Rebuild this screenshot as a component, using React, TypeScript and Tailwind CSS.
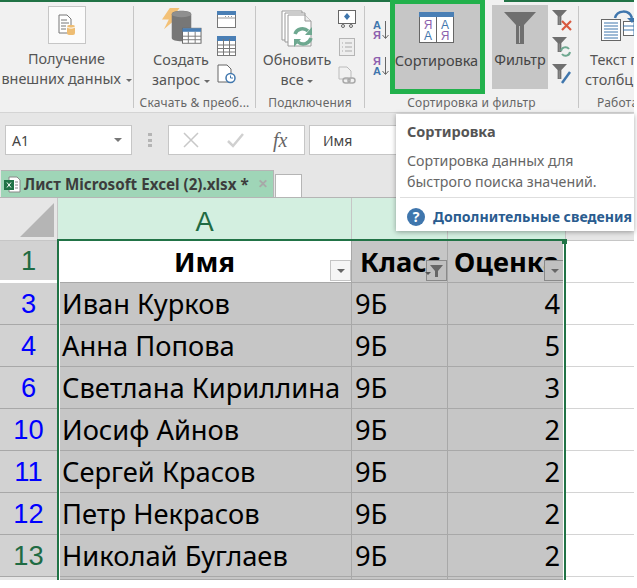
const uiFont = "font-['Noto_Sans','Open_Sans',sans-serif]"

const rows = [
  { n: '3', name: 'Иван Курков', score: '4' },
  { n: '4', name: 'Анна Попова', score: '5' },
  { n: '6', name: 'Светлана Кириллина', score: '3' },
  { n: '10', name: 'Иосиф Айнов', score: '2' },
  { n: '11', name: 'Сергей Красов', score: '2' },
  { n: '12', name: 'Петр Некрасов', score: '2' },
  { n: '13', name: 'Николай Буглаев', score: '2' },
]

function Caret({ className = '' }: { className?: string }) {
  return <span className={`inline-block w-0 h-0 border-x-[3px] border-x-transparent border-t-[3px] border-t-[#6a6a6a] align-middle ${className}`} />
}

function ExternalDataIcon() {
  return (
    <svg width="18" height="22" viewBox="0 0 18 22">
      <path d="M1 1h8l4 4v14H1z" fill="#fff" stroke="#777" />
      <path d="M3 6h6M3 9h8M3 12h5M3 15h5" stroke="#777" />
      <rect x="9" y="11" width="8" height="10" rx="2" fill="#eebd73" />
      <path d="M9 13c2 1.500 6 1.500 8 0" stroke="#fff" fill="none" />
    </svg>
  )
}

function QueryIcon() {
  return (
    <svg width="41" height="37" viewBox="0 0 42 42" preserveAspectRatio="none">
      <path d="M9 0h10l-6 9h6L3 24l5-11H1z" fill="#f3c177" />
      <path d="M11 7c0-5 20-5 20 0v27c0 5-20 5-20 0z" fill="#777" />
      <ellipse cx="21" cy="7" rx="10" ry="3.500" fill="#8f8f8f" />
      <rect x="22" y="23" width="19" height="17" fill="#fff" stroke="#666" />
      <rect x="22" y="23" width="19" height="4" fill="#4a7fb5" />
      <path d="M22 32h19M22 36h19M28 27v13M35 27v13" stroke="#777" />
    </svg>
  )
}

function SmallWindow() {
  return (
    <svg width="19" height="17" viewBox="0 0 19 17">
      <rect x=".5" y=".5" width="18" height="16" fill="#fff" stroke="#777" />
      <rect x="0" y="0" width="19" height="4" fill="#4a7fb5" />
      <path d="M1 7h17" stroke="#999" />
      <path d="M8 5.500h9" stroke="#999" strokeDasharray="1 2" />
    </svg>
  )
}

function SmallTable() {
  return (
    <svg width="19" height="20" viewBox="0 0 19 20">
      <rect x=".5" y=".5" width="18" height="19" fill="#fff" stroke="#777" />
      <rect x="0" y="0" width="19" height="5" fill="#4a7fb5" />
      <path d="M1 9h18M1 12.500h18M1 16h18M6.500 3v17M12.500 3v17" stroke="#777" />
    </svg>
  )
}

function RecentIcon() {
  return (
    <svg width="19" height="20" viewBox="0 0 19 20">
      <path d="M1 1h9l4 4v13H1z" fill="#fff" stroke="#666" />
      <circle cx="13.500" cy="14" r="4.500" fill="#fff" stroke="#3f76ad" strokeWidth="1.500" />
      <path d="M13.500 11.500V14h2.500" stroke="#3f76ad" fill="none" />
    </svg>
  )
}

function RefreshAllIcon() {
  return (
    <svg width="32" height="38" viewBox="0 0 32 38">
      <path d="M1 1h20v29H1z" fill="#fff" stroke="#999" />
      <path d="M4 3h20v29H4z" fill="#fff" stroke="#999" />
      <path d="M7 5h17l6 6v25H7z" fill="#fff" stroke="#999" />
      <path d="M24 5v6h6" fill="#eee" stroke="#999" />
      <path d="M14 24a8 8 0 0 1 13-3" stroke="#6ea890" strokeWidth="3.500" fill="none" />
      <path d="M30 28a8 8 0 0 1-13 4" stroke="#6ea890" strokeWidth="3.500" fill="none" />
      <path d="M31 17v8h-7zM13 37v-8h7z" fill="#6ea890" />
    </svg>
  )
}

function ConnectionIcons() {
  return (
    <div className="flex flex-col gap-[10px] items-center">
      <svg width="18" height="18" viewBox="0 0 18 18">
        <rect x=".5" y=".5" width="17" height="13" fill="#fff" stroke="#666" />
        <path d="M9 3l3 3.500-3 3.500-3-3.500z" fill="#3f76ad" />
        <circle cx="5" cy="16" r="1.500" fill="none" stroke="#666" />
        <circle cx="13" cy="16" r="1.500" fill="none" stroke="#666" />
      </svg>
      <svg width="16" height="18" viewBox="0 0 16 18">
        <rect x=".5" y=".5" width="15" height="17" fill="#eee" stroke="#b5b5b5" />
        <path d="M3 5h1M6 5h7M3 9h1M6 9h7M3 13h1M6 13h7" stroke="#aaa" />
      </svg>
      <svg width="18" height="19" viewBox="0 0 18 19">
        <path d="M1 1h8l4 4v8H1z" fill="#f1f1f1" stroke="#bbb" />
        <rect x="5" y="12" width="7" height="5" rx="2.500" fill="none" stroke="#aaa" strokeWidth="1.500" />
        <rect x="10" y="12" width="7" height="5" rx="2.500" fill="none" stroke="#aaa" strokeWidth="1.500" />
      </svg>
    </div>
  )
}

function SortSmall({ flip }: { flip?: boolean }) {
  const top = flip ? ['Я', 'text-[#8d5fae]'] : ['А', 'text-[#3f76ad]']
  const bottom = flip ? ['А', 'text-[#3f76ad]'] : ['Я', 'text-[#8d5fae]']
  return (
    <div className="flex items-center gap-[1px] h-[20px]">
      <div className="flex flex-col text-[11px] leading-[10px] font-bold font-['Liberation_Sans',sans-serif]">
        <span className={top[1]}>{top[0]}</span>
        <span className={bottom[1]}>{bottom[0]}</span>
      </div>
      <svg width="7" height="20" viewBox="0 0 7 20">
        <path d="M3.500 1v17M.5 15l3 3.500 3-3.500" stroke="#666" fill="none" />
      </svg>
    </div>
  )
}

function SortIcon() {
  return (
    <svg width="35" height="31" viewBox="0 0 35 31">
      <rect x=".5" y=".5" width="34" height="30" fill="#fff" stroke="#666" />
      <rect x="0" y="0" width="35" height="5" fill="#4a7fb5" />
      <path d="M17.500 5v26" stroke="#666" />
      <text x="9" y="17" fontSize="12" fill="#8d5fae" textAnchor="middle" fontFamily="Liberation Sans">Я</text>
      <text x="9" y="28" fontSize="12" fill="#3f76ad" textAnchor="middle" fontFamily="Liberation Sans">А</text>
      <text x="26" y="17" fontSize="12" fill="#3f76ad" textAnchor="middle" fontFamily="Liberation Sans">А</text>
      <text x="26" y="28" fontSize="12" fill="#8d5fae" textAnchor="middle" fontFamily="Liberation Sans">Я</text>
    </svg>
  )
}

function Funnel({ size = 32, color = '#6f6f6f' }: { size?: number; color?: string }) {
  return (
    <svg width={size} height={size} viewBox="0 0 32 32">
      <path d="M0 0h32L20 13v19h-8V13z" fill={color} />
      <path d="M15.500 14v17" stroke="#bbb" />
    </svg>
  )
}

function FilterSideIcons() {
  return (
    <div className="flex flex-col gap-[6px] items-center">
      <div className="relative w-[20px] h-[21px]">
        <Funnel size={15} />
        <svg width="11" height="11" viewBox="0 0 11 11" className="absolute right-0 bottom-0">
          <path d="M1 1l9 9M10 1l-9 9" stroke="#d9593f" strokeWidth="2.200" />
        </svg>
      </div>
      <div className="relative w-[20px] h-[21px]">
        <Funnel size={15} />
        <svg width="13" height="13" viewBox="0 0 13 13" className="absolute right-0 bottom-0">
          <path d="M2 6a4.500 4.500 0 0 1 8-2M11 7a4.500 4.500 0 0 1-8 2" stroke="#6ea890" strokeWidth="2" fill="none" />
        </svg>
      </div>
      <div className="relative w-[20px] h-[21px]">
        <Funnel size={15} />
        <svg width="12" height="14" viewBox="0 0 12 14" className="absolute right-0 bottom-0">
          <path d="M10 1L2 12" stroke="#3f76ad" strokeWidth="2.500" />
        </svg>
      </div>
    </div>
  )
}

function TextColumnsIcon() {
  return (
    <svg width="44" height="32" viewBox="0 0 44 32">
      <rect x=".5" y="9.500" width="19" height="21" fill="#fff" stroke="#666" />
      <path d="M3 13h14M3 16h14M3 19h14M3 22h14M3 25h14M3 28h14" stroke="#3f76ad" />
      <rect x="22.500" y="11.500" width="21" height="14" fill="#fff" stroke="#666" />
      <path d="M22 16h22M22 20h22M33 12v14" stroke="#3f76ad" />
      <path d="M14 8c2-8 14-9 17 0" stroke="#3f76ad" strokeWidth="2.500" fill="none" />
      <path d="M26 8h9l-4 5z" fill="#3f76ad" />
    </svg>
  )
}

function Group({ label, className, labelClass = '', children }: { label: string; className: string; labelClass?: string; children: React.ReactNode }) {
  return (
    <div className={`flex flex-col border-r border-[#c6c6c6] my-[4px] h-[102px] shrink-0 ${className}`}>
      <div className="flex-1 flex min-h-0">{children}</div>
      <div className={`h-[10px] text-[12px] leading-[10px] text-[#666] text-center whitespace-nowrap tracking-[0.2px] ${labelClass}`}>{label}</div>
    </div>
  )
}

function FilterButton({ active, selected }: { active?: boolean; selected?: boolean }) {
  return (
    <div className={`absolute right-0 bottom-[1px] w-[21px] h-[21px] flex items-center justify-center border ${selected ? 'border-[#8a8a8a] bg-[#c0c0c0]' : 'border-[#c4c4c4] bg-[#f5f5f5]'}`}>
      {active ? (
        <div className="flex items-center relative">
          <svg width="13" height="12" viewBox="0 0 13 12">
            <path d="M0 0h13L8 6v6H5V6z" fill="#666" />
          </svg>
          <span className="absolute left-[-5px] top-[7px] w-0 h-0 border-x-[3px] border-x-transparent border-t-[3px] border-t-[#555]" />
        </div>
      ) : (
        <span className="w-0 h-0 border-x-[4px] border-x-transparent border-t-[4px] border-t-[#666]" />
      )}
    </div>
  )
}

function Ribbon() {
  const btnText = 'text-[14.400px] leading-[20px] text-[#555] text-center whitespace-nowrap'
  return (
    <div className="h-[113px] bg-[#f1f1f1] border-t-[2px] border-[#217346] border-b border-b-[#d4d4d4] flex shrink-0 relative">
      <Group label="" className="w-[134px]">
        <div className="flex flex-col items-center w-full">
          <div className="w-[38px] h-[38px] bg-[#fbfbfb] border border-[#c6c6c6] flex items-center justify-center">
            <ExternalDataIcon />
          </div>
          <div className={`${btnText} mt-[5px]`}>
            Получение<br />внешних данных <Caret className="ml-[1px]" />
          </div>
        </div>
      </Group>
      <Group label="Скачать & преоб..." className="w-[122px]">
        <div className="flex pl-[14px] pt-[2px]">
          <div className="flex flex-col items-center w-[66px]">
            <QueryIcon />
            <div className={`${btnText} mt-[5px]`}>
              Создать<br />запрос <Caret />
            </div>
          </div>
          <div className="flex flex-col gap-[8px] items-center mt-[3px] ml-[3px]">
            <SmallWindow />
            <SmallTable />
            <RecentIcon />
          </div>
        </div>
      </Group>
      <Group label="Подключения" className="w-[109px]">
        <div className="flex pl-[6px] pt-[4px]">
          <div className="flex flex-col items-center w-[70px]">
            <RefreshAllIcon />
            <div className={`${btnText} mt-[2px]`}>
              Обновить<br />все <Caret />
            </div>
          </div>
          <div className="ml-[6px]"><ConnectionIcons /></div>
        </div>
      </Group>
      <Group label="Сортировка и фильтр" className="w-[214px]">
        <div className="flex">
          <div className="flex flex-col gap-[16px] w-[26px] ml-[8px] mt-[14px]">
            <SortSmall />
            <SortSmall flip />
          </div>
          <div className="w-[91px] h-[86px] ml-[-8px] mt-[-2px] flex flex-col items-center bg-[#c6c6c6]">
            <div className="mt-[8px]"><SortIcon /></div>
            <div className="text-[14.500px] leading-[20px] text-[#444] mt-[7px]">Сортировка</div>
          </div>
          <div className="w-[56px] h-[84px] ml-[10px] mt-[-1px] flex flex-col items-center bg-[#c6c6c6]">
            <div className="mt-[7px]"><Funnel /></div>
            <div className="text-[14.400px] leading-[20px] text-[#444] mt-[6px]">Фильтр</div>
          </div>
          <div className="ml-[4px] mt-[4px]"><FilterSideIcons /></div>
        </div>
      </Group>
      <Group label="Работа" className="flex-1 border-r-0 min-w-0 overflow-hidden" labelClass="text-left pl-[18px]">
        <div className="flex flex-col pl-[6px] pt-[4px]">
          <div className="ml-[16px]"><TextColumnsIcon /></div>
          <div className="text-[14.400px] leading-[20px] text-[#555] mt-[8px] whitespace-nowrap">
            <span className="pl-[5px]">Текст п</span><br />столбц
          </div>
        </div>
      </Group>
    </div>
  )
}

function FormulaBar() {
  return (
    <div className="h-[58px] bg-[#e6e6e6] flex shrink-0 pt-[12px] pl-[5px]">
      <div className="w-[127px] h-[30px] bg-white border border-[#c6c6c6] flex items-center justify-between pl-[6px] pr-[9px] text-[14px] text-[#444]">
        A1 <span className="w-0 h-0 border-x-[4px] border-x-transparent border-t-[4px] border-t-[#777]" />
      </div>
      <div className="w-[4px] h-[14px] mt-[8px] ml-[16px] mr-[16px] flex flex-col justify-between">
        <span className="h-[3px] bg-[#b5b5b5]" />
        <span className="h-[3px] bg-[#b5b5b5]" />
        <span className="h-[3px] bg-[#b5b5b5]" />
      </div>
      <div className="w-[137px] h-[30px] bg-white border border-[#c6c6c6] flex items-center pl-[14px]">
        <svg width="16" height="16" viewBox="0 0 16 16"><path d="M1 1l14 14M15 1L1 15" stroke="#c8c8c8" strokeWidth="1.500" /></svg>
        <svg width="17" height="15" viewBox="0 0 17 15" className="ml-[28px]"><path d="M1 8l5 5L16 1" stroke="#d0d0d0" strokeWidth="2.500" fill="none" /></svg>
        <span className="ml-[29px] text-[20px] italic text-[#666] font-['Liberation_Serif',serif]">fx</span>
      </div>
      <div className="flex-1 h-[30px] ml-[4px] bg-white border border-[#c6c6c6] flex items-center pl-[13px] text-[14px] text-[#444]">Имя</div>
    </div>
  )
}

function TabStrip() {
  return (
    <div className="h-[27px] bg-[#e6e6e6] flex items-end shrink-0 border-b border-[#b5b5b5]">
      <div className="w-[273px] h-[27px] ml-[1px] bg-[#9fd5b7] border-t border-r border-[#b5b5b5] flex items-center pl-[3px] text-[15.200px] font-bold text-[#3c3c3c] whitespace-nowrap">
        <svg width="17" height="17" viewBox="0 0 17 17" className="shrink-0">
          <path d="M5 1h8l3 3v12H5z" fill="#fff" stroke="#888" />
          <path d="M11 6h3M11 9h3M11 12h3" stroke="#888" />
          <rect x="0" y="4" width="10" height="10" fill="#217346" />
          <path d="M3 6.500l4 5M7 6.500l-4 5" stroke="#fff" />
        </svg>
        <span className="ml-[3px]">Лист Microsoft Excel (2).xlsx *</span>
        <span className="ml-[9px] text-[#a8a8a8] text-[12px]">✕</span>
      </div>
      <div className="w-[27px] h-[23px] ml-[1px] bg-white border-x border-t border-[#b5b5b5]" />
    </div>
  )
}

function Sheet() {
  const cell = 'border-r border-b border-[#a8a8a8] bg-[#c6c6c6] flex items-center text-black'
  return (
    <div className="relative flex-1 grid grid-cols-[58px_294px_96px_118px_1fr] grid-rows-[43px_repeat(8,42px)] overflow-hidden text-[27.300px] leading-none font-['Noto_Sans',sans-serif]">
      {/* column headers */}
      <div className="relative bg-[#e6e6e6] border-r border-b border-[#c6c6c6] overflow-hidden">
        <div className="absolute right-[3px] bottom-[3px] w-0 h-0 border-l-[34px] border-l-transparent border-b-[34px] border-b-[#b5b5b5]" />
      </div>
      <div className="bg-[#d3efe0] border-r border-b border-[#c6c6c6] flex items-center justify-center pt-[5px] text-[#1f6b43] font-['Liberation_Sans',sans-serif]">A</div>
      <div className="bg-[#d3efe0] border-r border-b border-[#c6c6c6]" />
      <div className="bg-[#d3efe0] border-r border-b border-[#c6c6c6]" />
      <div className="bg-[#e6e6e6] border-b border-[#c6c6c6]" />

      {/* header row */}
      <div className="bg-[#d2d2d2] border-r border-b-[3px] border-[#c6c6c6] border-b-white flex items-center justify-center text-[#1f6b43] font-['Liberation_Sans',sans-serif]">1</div>
      <div className="relative bg-white border-r border-b border-[#a8a8a8] flex items-center justify-center font-bold text-black">
        Имя
        <FilterButton />
      </div>
      <div className={`${cell} relative font-bold pl-[8px] overflow-hidden whitespace-nowrap`}>
        Класс
        <FilterButton active selected />
      </div>
      <div className={`${cell} relative font-bold pl-[6px] overflow-hidden whitespace-nowrap`}>
        Оценка
        <FilterButton selected />
      </div>
      <div className="border-b border-[#d4d4d4] bg-white" />

      {rows.map(r => (
        <div key={r.n} className="contents">
          <div className={`bg-[#d2d2d2] border-r border-b border-[#a8a8a8] flex items-center justify-center font-['Liberation_Sans',sans-serif] ${r.n === '13' ? 'text-[#1f6b43]' : 'text-[#0000ff]'}`}>{r.n}</div>
          <div className={`${cell} pl-[4px] whitespace-nowrap`}>{r.name}</div>
          <div className={`${cell} pl-[3px]`}>9Б</div>
          <div className={`${cell} justify-end pr-[5px]`}>{r.score}</div>
          <div className="border-b border-[#d4d4d4] bg-white" />
        </div>
      ))}

      <div className="bg-[#e6e6e6] border-r border-[#c6c6c6]" />
      <div className={cell} />
      <div className={cell} />
      <div className={cell} />
      <div className="bg-white" />

      {/* selection frame */}
      <div className="absolute left-[57px] top-[41px] w-[509px] h-[400px] border-x-[2px] border-t-[2px] border-[#217346]">
        <div className="absolute inset-0 border-x border-white" />
      </div>
      <div className="absolute left-[562px] top-[41px] w-[5px] h-[5px] bg-[#217346]" />
    </div>
  )
}

export default function App() {
  return (
    <div className={`relative w-[637px] h-[588px] bg-white overflow-hidden ${uiFont}`}>
      <div className="w-[634px] h-[580px] flex flex-col overflow-hidden">
        <Ribbon />
        <FormulaBar />
        <TabStrip />
        <Sheet />
      </div>
      {/* highlighted button frame */}
      <div className="absolute left-[390px] top-0 w-[95px] h-[94px] border-[5px] border-t-[4px] border-[#22b14c]" />
      <div className="absolute left-[485px] top-0 w-[19px] h-[2px] bg-[#f1f1f1]" />
      {/* tooltip */}
      <div className="absolute left-[396px] top-[114px] w-[238px] h-[117px] bg-white shadow-[0_1px_5px_rgba(0,0,0,0.35)] flex flex-col">
        <div className="text-[14.500px] font-bold text-[#555] pl-[11px] pt-[7px] leading-[20px]">Сортировка</div>
        <div className="text-[14.200px] text-[#666] pl-[11px] pt-[9px] leading-[21px] whitespace-nowrap">Сортировка данных для<br />быстрого поиска значений.</div>
        <div className="h-px bg-[#dedede] ml-[4px] mt-[5px]" />
        <div className="flex items-center pl-[11px] pt-[8px] gap-[8px] text-[14.100px] font-bold text-[#2a5c8f] whitespace-nowrap">
          <span className="w-[18px] h-[18px] rounded-full bg-[#3f76ad] text-white text-[14px] leading-[18px] text-center shrink-0">?</span>
          Дополнительные сведения
        </div>
      </div>
    </div>
  )
}
